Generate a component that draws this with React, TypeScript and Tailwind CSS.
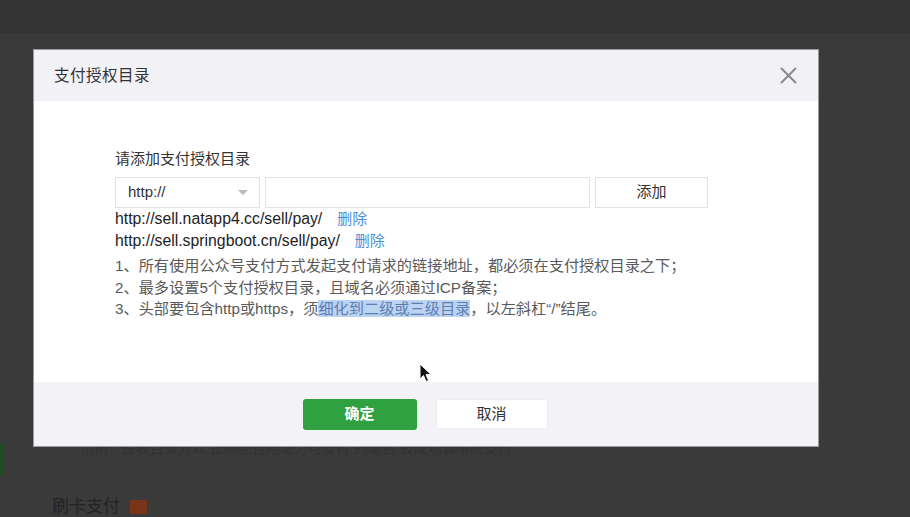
import React from 'react';

const font = 'font-["Liberation_Sans","Noto_Sans_CJK_SC",sans-serif]';

const urls = ['http://sell.natapp4.cc/sell/pay/', 'http://sell.springboot.cn/sell/pay/'];

const Cursor: React.FC = () => (
  <svg width="14" height="20" viewBox="0 0 14 20" className="absolute left-[419px] top-[363px]">
    <path d="M1 1 L1 16 L4.5 12.5 L7 18.5 L9.5 17.5 L7 11.5 L12 11.5 Z" fill="#111" stroke="#fff" strokeWidth="1" strokeLinejoin="round" />
  </svg>
);

const AuthDirModal: React.FC = () => (
  <div className="absolute left-[33px] top-[49px] w-[786px] h-[398px] flex flex-col bg-white border border-[#9a9a9a] overflow-hidden">
    {/* Header */}
    <div className="h-[51px] shrink-0 bg-[#f2f2f6] flex items-center justify-between pl-[20px] pr-[20px]">
      <span className="text-[15.5px] text-[#333] tracking-[0.5px]">支付授权目录</span>
      <svg width="17" height="17" viewBox="0 0 17 17" className="mr-[1px]">
        <path d="M1.5 1.5 L15.5 15.5 M15.5 1.5 L1.5 15.5" stroke="#8a8a8a" strokeWidth="2" strokeLinecap="round" />
      </svg>
    </div>

    {/* Body */}
    <div className="flex-1 pl-[81px] pt-[48px]">
      <div className="text-[15px] leading-[20px] text-[#333]">请添加支付授权目录</div>
      <div className="flex mt-[8px] h-[31px] gap-[5px]">
        <div className="w-[145px] border border-[#e3e3e3] flex items-center justify-between pl-[12px] pr-[11px]">
          <span className="text-[15px] text-[#333]">http://</span>
          <svg width="10" height="6" viewBox="0 0 10 6">
            <path d="M0 0 L10 0 L5 5 Z" fill="#bbb" />
          </svg>
        </div>
        <div className="w-[325px] border border-[#e3e3e3]" />
        <button className="w-[113px] border border-[#e3e3e3] bg-white text-[15px] text-[#333] flex items-center justify-center">
          添加
        </button>
      </div>
      <div>
        {urls.map((u) => (
          <div key={u} className="flex items-center text-[15.8px] leading-[22px] text-[#222]">
            <span>{u}</span>
            <span className="ml-[15px] text-[15px] text-[#4a90d9]">删除</span>
          </div>
        ))}
      </div>
      <div className="mt-[3px] text-[15.2px] leading-[21.5px] text-[#5a5a5a]">
        <div>1、所有使用公众号支付方式发起支付请求的链接地址，都必须在支付授权目录之下；</div>
        <div>2、最多设置5个支付授权目录，且域名必须通过ICP备案；</div>
        <div>
          3、头部要包含http或https，须
          <span className="bg-[#bcd3f2] text-[#5b7eb3]">细化到二级或三级目录</span>
          ，以左斜杠“/”结尾。
        </div>
      </div>
    </div>

    {/* Footer */}
    <div className="h-[64px] shrink-0 bg-[#f3f3f7] flex items-start justify-center gap-[19px] pt-[17px] pr-[2px]">
      <button className="w-[114px] h-[31px] rounded-[3px] bg-[#30a140] text-white text-[15px] font-bold">确定</button>
      <button className="w-[112px] h-[30px] rounded-[2px] bg-white border border-[#ececf0] text-[#333] text-[15px]">取消</button>
    </div>
  </div>
);

export default function App() {
  return (
    <div className={`relative w-[910px] h-[517px] overflow-hidden bg-[#3a3a3a] ${font}`}>
      {/* Page behind overlay */}
      <div className="h-[33px] bg-[#333333]" />
      <div className="flex mt-[410px] h-[32px]">
        <div className="w-[3px] h-[32px] bg-[#1f4a26]" />
        <div className="ml-[77px] text-[14px] leading-[10px] text-[#323232]">
          示例：授权目录为以 正确配置地址为可支付 的域名 被成功调用的支付
        </div>
      </div>
      <div className="flex items-center mt-[22px] ml-[52px] gap-[10px]">
        <span className="text-[17px] leading-[20px] text-[#232323]">刷卡支付</span>
        <span className="w-[17px] h-[14px] bg-[#7a3418] rounded-[1px]" />
      </div>

      <AuthDirModal />
      <Cursor />
    </div>
  );
}
